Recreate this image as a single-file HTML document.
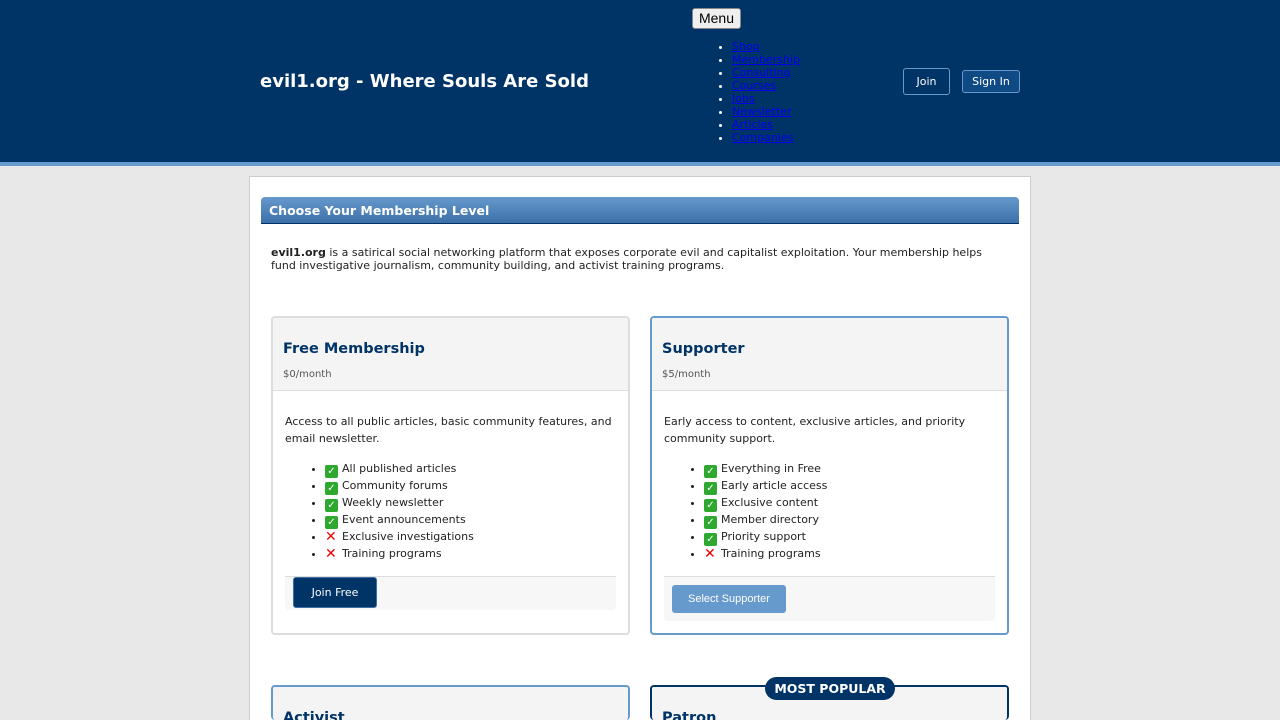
<!DOCTYPE html>
<html style="height:720px;overflow:hidden"><head><meta charset="utf-8"><style>
*{box-sizing:border-box;margin:0;padding:0}
body{width:1280px;height:720px;overflow:hidden;background:#e8e8e8;font-family:"DejaVu Sans",Verdana,sans-serif;color:#222;position:relative}
.hdr{position:absolute;left:0;top:0;width:1280px;height:166px;background:#003366;border-bottom:4px solid #6699cc}
.logo{position:absolute;left:260px;top:71px;color:#fff;font-weight:bold;font-size:18px}
.menu{position:absolute;left:692px;top:8px;width:49px;height:21px;background:#efefef;border:1px solid #888;border-radius:3px;font-family:"Liberation Sans",sans-serif;font-size:14px;text-align:center;line-height:19px;color:#000}
.nav{position:absolute;left:732px;top:40px;list-style:disc;font-size:11px;line-height:13px}
.nav a{color:#00e;text-decoration:underline}
.nav li{color:#fff}
.btn{position:absolute;color:#fff;font-size:11px;border:1px solid #6699cc;border-radius:3px;text-align:center}
.wrap{position:absolute;left:249px;top:176px;width:782px;height:544px;background:#fff;border:1px solid #ccc;border-bottom:none}
.ph{position:absolute;left:261px;top:197px;width:758px;height:27px;background:linear-gradient(#6699cc,#3d70a8);border-radius:4px 4px 0 0;border-bottom:1px solid #003366;color:#fff;font-weight:bold;font-size:12.5px;padding:6px 8px}
.intro{position:absolute;left:271px;top:246px;width:730px;font-size:11px;line-height:13px}
.card{position:absolute;width:359px;height:319px;border:2px solid #ddd;border-radius:4px;background:#fff;overflow:hidden}
.card.b{border-color:#6699cc}
.card.d{border-color:#003366}
.ch{height:73px;background:#f4f4f4;border-bottom:1px solid #ddd;padding:23px 10px 0}
.ch h3{color:#003366;font-size:14.5px;font-weight:bold}
.ch p{font-size:10px;color:#555;margin-top:12px}
.cb{padding:22px 12px 0}
.cb .d{font-size:11px;line-height:17px}
.cb ul{margin:14px 0 0 40px;font-size:11px;line-height:16.6px}
.ok{display:inline-block;width:13px;height:13px;background:#2ea82e;border-radius:2px;color:#fff;font-size:10px;line-height:13px;text-align:center;vertical-align:-2px;margin-right:4px;font-weight:bold}
.no{display:inline-block;width:13px;color:#e00;font-weight:bold;font-size:14px;margin-right:4px;vertical-align:-1px;line-height:13px}
.cf{position:absolute;left:12px;width:331px;background:#f7f7f7;border-top:1px solid #ddd;border-radius:0 0 4px 4px}
.pop{position:absolute;left:765px;top:677px;width:130px;height:23px;background:#003366;border-radius:12px;color:#fff;font-weight:bold;font-size:12.5px;text-align:center;line-height:23px}
</style></head><body>
<div class="hdr"></div>
<div class="logo">evil1.org - Where Souls Are Sold</div>
<div class="menu">Menu</div>
<ul class="nav"><li><a>Shop</a></li><li><a>Membership</a></li><li><a>Consulting</a></li><li><a>Courses</a></li><li><a>Jobs</a></li><li><a>Newsletter</a></li><li><a>Articles</a></li><li><a>Companies</a></li></ul>
<div class="btn" style="left:903px;top:68px;width:47px;height:27px;line-height:25px">Join</div>
<div class="btn" style="left:962px;top:70px;width:58px;height:23px;line-height:21px;background:#104a85">Sign In</div>
<div class="wrap"></div>
<div class="ph">Choose Your Membership Level</div>
<div class="intro"><b>evil1.org</b> is a satirical social networking platform that exposes corporate evil and capitalist exploitation. Your membership helps fund investigative journalism, community building, and activist training programs.</div>

<div class="card" style="left:271px;top:316px">
<div class="ch"><h3>Free Membership</h3><p>$0/month</p></div>
<div class="cb"><div class="d">Access to all public articles, basic community features, and email newsletter.</div>
<ul><li><span class="ok">✓</span>All published articles</li><li><span class="ok">✓</span>Community forums</li><li><span class="ok">✓</span>Weekly newsletter</li><li><span class="ok">✓</span>Event announcements</li><li><span class="no">✕</span>Exclusive investigations</li><li><span class="no">✕</span>Training programs</li></ul></div>
<div class="cf" style="top:258px;height:34px"><div style="position:absolute;left:8px;top:0;width:84px;height:31px;background:#003366;border:1px solid #3d70a8;border-radius:3px;color:#fff;font-size:11px;text-align:center;line-height:29px">Join Free</div></div>
</div>

<div class="card b" style="left:650px;top:316px">
<div class="ch"><h3>Supporter</h3><p>$5/month</p></div>
<div class="cb"><div class="d">Early access to content, exclusive articles, and priority community support.</div>
<ul><li><span class="ok">✓</span>Everything in Free</li><li><span class="ok">✓</span>Early article access</li><li><span class="ok">✓</span>Exclusive content</li><li><span class="ok">✓</span>Member directory</li><li><span class="ok">✓</span>Priority support</li><li><span class="no">✕</span>Training programs</li></ul></div>
<div class="cf" style="top:258px;height:45px"><div style="position:absolute;left:8px;top:8px;width:114px;height:28px;background:#6699cc;border-radius:3px;color:#fff;font-family:'Liberation Sans',sans-serif;font-size:11px;text-align:center;line-height:28px">Select Supporter</div></div>
</div>

<div class="card b" style="left:271px;top:685px;height:35px;border-bottom:none"><div class="ch"><h3>Activist</h3></div></div>
<div class="card d" style="left:650px;top:685px;height:35px;border-bottom:none"><div class="ch"><h3>Patron</h3></div></div>
<div class="pop">MOST POPULAR</div>
</body></html>
